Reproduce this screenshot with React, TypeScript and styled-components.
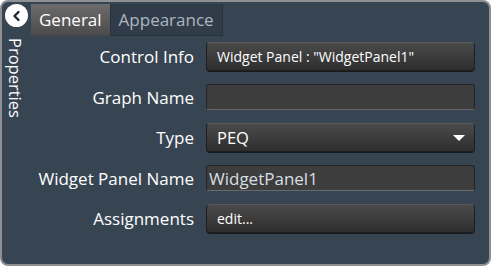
import React from 'react';
import styled, { createGlobalStyle } from 'styled-components';

const Global = createGlobalStyle`
  html, body {
    margin: 0;
    padding: 0;
    background: #ffffff;
  }
  body {
    font-family: "Open Sans", "Noto Sans", sans-serif;
  }
`;

const Panel = styled.div`
  box-sizing: border-box;
  width: 491px;
  height: 266px;
  background: #374553;
  border: 2px solid #8e9093;
  border-radius: 8px;
  display: flex;
  overflow: hidden;
`;

const SideStrip = styled.div`
  width: 29px;
  display: flex;
  flex-direction: column;
  align-items: center;
  padding-top: 2px;
  gap: 11px;
`;

const CollapseButton = styled.div`
  width: 23px;
  height: 23px;
  border-radius: 50%;
  background: #ffffff;
  display: flex;
  align-items: center;
  justify-content: center;
`;

const SideTitle = styled.div`
  writing-mode: vertical-rl;
  color: #ffffff;
  font-size: 16.5px;
  line-height: 18px;
  margin-left: -3px;
`;

const Main = styled.div`
  flex: 1;
  display: flex;
  flex-direction: column;
`;

const TabBar = styled.div`
  display: flex;
  padding-top: 2px;
`;

const Tab = styled.div<{ $active?: boolean }>`
  height: 32px;
  box-sizing: border-box;
  display: flex;
  align-items: center;
  padding: 0 8px;
  font-size: 17px;
  color: ${(p) => (p.$active ? '#ffffff' : '#aeb6bf')};
  background: ${(p) =>
    p.$active ? 'linear-gradient(#6c6c6c, #4b4b4b)' : '#303c49'};
  border-bottom: 1px solid ${(p) => (p.$active ? '#444' : '#28323d')};
  border-right: 1px solid #28323d;
`;

const Form = styled.div`
  display: grid;
  grid-template-columns: 163px 269px;
  column-gap: 12px;
  row-gap: 13px;
  align-items: center;
  padding-top: 6px;
`;

const Label = styled.div`
  text-align: right;
  color: #ffffff;
  font-size: 17px;
  white-space: nowrap;
`;

const Button = styled.div`
  box-sizing: border-box;
  height: 29px;
  border-radius: 4px;
  border: 1px solid #1e1e1e;
  border-top-color: #5a5a5a;
  background: linear-gradient(#4a4a4a, #2e2e2e);
  box-shadow: 0 1px 0 #151a20;
  color: #ffffff;
  font-size: 14px;
  display: flex;
  align-items: center;
  padding: 0 10px;
`;

const Select = styled(Button)`
  font-size: 16.5px;
  justify-content: space-between;
  padding-right: 9px;
`;

const TextBox = styled.div`
  box-sizing: border-box;
  height: 26px;
  border-radius: 3px;
  background: #3d3d3d;
  border: 1px solid #252525;
  border-bottom-color: #6a6a6a;
  color: #d9dee3;
  font-size: 17px;
  display: flex;
  align-items: center;
  padding: 0 2px;
`;

const Caret = styled.span`
  width: 0;
  height: 0;
  border-left: 6px solid transparent;
  border-right: 6px solid transparent;
  border-top: 6px solid #ffffff;
`;

export default function App() {
  return (
    <>
      <Global />
      <Panel>
        <SideStrip>
          <CollapseButton>
            <svg width="12" height="12" viewBox="0 0 12 12">
              <path d="M7.5 2 L3.5 6 L7.5 10" fill="none" stroke="#1d2530" strokeWidth="2.4" strokeLinecap="round" strokeLinejoin="round" />
            </svg>
          </CollapseButton>
          <SideTitle>Properties</SideTitle>
        </SideStrip>
        <Main>
          <TabBar>
            <Tab $active>General</Tab>
            <Tab>Appearance</Tab>
          </TabBar>
          <Form>
            <Label>Control Info</Label>
            <Button>Widget Panel : "WidgetPanel1"</Button>
            <Label>Graph Name</Label>
            <TextBox />
            <Label>Type</Label>
            <Select>
              PEQ
              <Caret />
            </Select>
            <Label>Widget Panel Name</Label>
            <TextBox>WidgetPanel1</TextBox>
            <Label>Assignments</Label>
            <Button>edit...</Button>
          </Form>
        </Main>
      </Panel>
    </>
  );
}
